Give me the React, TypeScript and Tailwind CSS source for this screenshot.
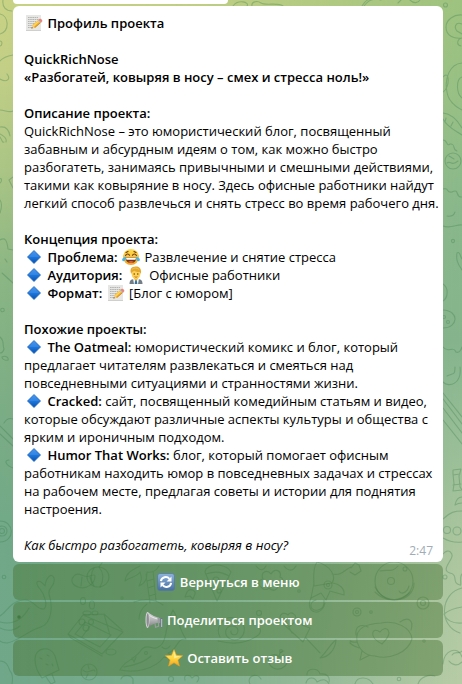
import type { ReactNode } from "react";

function Wallpaper() {
  return (
    <div className="absolute inset-0 overflow-hidden" aria-hidden="true">
      <svg className="absolute inset-0 h-full w-full" viewBox="0 0 100 100" preserveAspectRatio="none">
        <defs>
          <linearGradient id="wallLeft" x1="0" y1="0" x2="0" y2="1">
            <stop offset="0" stopColor="#c9d285" />
            <stop offset="0.1" stopColor="#c3cf86" />
            <stop offset="0.25" stopColor="#aac585" />
            <stop offset="0.4" stopColor="#8bb684" />
            <stop offset="0.6" stopColor="#7bad85" />
            <stop offset="0.8" stopColor="#70a888" />
            <stop offset="1" stopColor="#70a78a" />
          </linearGradient>
          <linearGradient id="wallRight" x1="0" y1="0" x2="0" y2="1">
            <stop offset="0" stopColor="#9dc27f" />
            <stop offset="0.15" stopColor="#96bf85" />
            <stop offset="0.3" stopColor="#89b78b" />
            <stop offset="0.5" stopColor="#85b48c" />
            <stop offset="0.65" stopColor="#99be97" />
            <stop offset="0.8" stopColor="#acc69f" />
            <stop offset="1" stopColor="#b7cca6" />
          </linearGradient>
          <linearGradient id="wallFade" x1="0" y1="0" x2="1" y2="0">
            <stop offset="0" stopColor="#000" />
            <stop offset="0.4" stopColor="#333" />
            <stop offset="0.7" stopColor="#888" />
            <stop offset="1" stopColor="#fff" />
          </linearGradient>
          <mask id="wallMask">
            <rect width="100" height="100" fill="url(#wallFade)" />
          </mask>
        </defs>
        <rect width="100" height="100" fill="url(#wallLeft)" />
        <rect width="100" height="100" fill="url(#wallRight)" mask="url(#wallMask)" />
      </svg>
      <svg
        className="absolute inset-0 h-full w-full"
        viewBox="0 0 462 684"
        preserveAspectRatio="xMidYMax slice"
        fill="none"
        stroke="#3f7d50"
        strokeOpacity="0.34"
        strokeWidth="1.1"
        strokeLinecap="round"
        strokeLinejoin="round"
      >
        {/* left edge */}
        <path d="M3 0c-1 7 3 11 9 11M0 14c9 2 10 17 0 20M0 41c3 0 2 5 0 5M13 55C8 56 3 57 0 61M0 79c7 4 11 0 7-5M0 110c5 0 9 3 13 1M0 127c6-1 9 3 10 9M0 134c4 2 7 5 6 8M0 137c4 7 2 5 4 5M13 177l-4 3 4 8M0 179c2-2 2 3 0 4M0 200c3 4 1 10 0 13M0 240c5-3 7 0 8 9l5 1M2 273l11 10M5 259l2 3" />
        <circle cx="2.500" cy="310" r="1.800" />
        <path d="M0 337c5 4 2 8 4 12-1 4-4 4-4 4M2 357c4-2 7 1 6 3-3 1-6-1-6-3M0 426l13 13M0 434l13 12M4 423c3-5 6-5 9-4M9 460c-5 0-4 5 4 8" />
        <path d="M0 521c14 0 16 20 0 21" />
        <circle cx="2" cy="531" r="5" />
        <circle cx="2" cy="531" r="2.500" />
        <circle cx="4" cy="577" r="1.800" />
        {/* top edge */}
        <path d="M233 6c5-7 17-4 14 0M252 6c-1-4 5-6 9-3s18-1 22 3M362 6c2-3 5-6 6-6M364 6c4-6 10-8 17-6M398 3l3-3M410 0c4 4 8 3 10 0" />
        {/* right edge */}
        <circle cx="445.500" cy="5" r="2" />
        <path d="M462 15c-8-1-16 5-16 12 0 9 8 12 16 11M462 24c-7-3-8 4-5 7l5 3M462 38c-5 1-6 7-1 8M462 63c-12 1-18 15-15 29 1 8 8 15 15 18M462 77c-6 2-6 16 0 21M443 77c7-8 7 11 0 15M443 113c9 1 15 8 19 15M443 119c4 8 13 12 19 16M446 118l-1 4M453 122l-2 4M443 140c5 0 3 7 7 4 6-1 2 6 7 7" />
        <circle cx="453" cy="161" r="8" />
        <path d="M447 163c4-3 4 4 11-2M449 156l5 3M443 189c7-2 2 4 9 3 8-4 3 6 10 5M447 216c5 1 7-1 8-4M443 226c8 3 14-2 19-1" />
        <circle cx="453" cy="241" r="1.600" />
        <path d="M457 253c3-2 3 3 5 6M457 253c-1 6 0 10 5 17M443 284c6 4 5 14 0 17M443 310c17 1 15 18 0 18" />
        <circle cx="444" cy="317" r="1.500" />
        <circle cx="448" cy="322" r="1.500" />
        <path d="M443 347c5 7 10-2 13 5 4 2 6-5 6-5M443 382c6 6 19 2 17-15M447 376c7-3 8-1 8-9M443 393l19 24M443 399l19 25M443 408l19 25M443 420l19 24" />
        <path d="M453 470l8-1-2 7 1 11 2 3-9 1 1-7-1-10zM453 475l7-1M453 485l8-1M455 505c1-5 4-8 7-8M455 505c3-2 4-2 7-2M443 519c7-7 12-8 19-8M443 538c7 4 12 5 19 4" />
        <circle cx="447" cy="530" r="3.500" />
        <circle cx="457" cy="531" r="4" />
        <path d="M443 554c6-7 11 0 8 5-4 7-8 12-1 14 9 2 1 10 10 12 2 1-1-8 2-11M462 588c-22 5-24 38-2 45M444 614c4-3 10-6 18-7M444 614c2 6 9 10 18 9M443 664c1-14 15-19 19-7" />
        <circle cx="445" cy="577" r="2" />
        <path d="M452 655c3-5 7 0 10-4M449 661c4 5 9 5 13 1" />
        {/* whale */}
        <path d="M0 616c7-4 11-16 25-16 10 0 11 10 19 9 4-3 1-14-4-20-7-8-1-11 5-3 1-9 7-14 9-8 2 9-6 8-5 16 4 12 3 29-8 33-14 4-22 14-34 16-4 0-6-1-7-2" />
        <path d="M0 622c16 4 24-5 29-14M0 628c8 4 15 2 20-2" />
        <circle cx="19" cy="617" r="1.500" fill="#3f7d50" />
        {/* croissant and pumpkin */}
        <path d="M74 576c3-4 7-1 10 0 6 2 10-3 11 0 0 8-9 14-17 11-6-2-8-7-4-11zM82 577l-1 9M90 577l2 7" />
        <ellipse cx="98" cy="577" rx="11" ry="10" />
        <path d="M94 568c-4 6-3 13 0 18M99 567c5 6 5 13 1 20M99 567l3-4" />
        {/* nuts */}
        <ellipse cx="83" cy="601" rx="2.500" ry="3.500" />
        <ellipse cx="92" cy="605" rx="2.500" ry="4" />
        <ellipse cx="87" cy="613" rx="4" ry="2" />
        <ellipse cx="95" cy="613" rx="3" ry="2" />
        <circle cx="122" cy="598" r="1.200" />
        {/* box of sweets */}
        <path d="M68 634l15-19 40 17-21 22zM83 615l21-1 18 16M68 634l3 4 31 18M75 634l10-12 26 13-11 12zM90 626l-8 11M104 614l6 21" />
        <circle cx="82" cy="622" r="3" />
        <circle cx="86" cy="628" r="3" />
        <circle cx="91" cy="622" r="2.500" />
        <ellipse cx="111" cy="652" rx="5" ry="3" />
        {/* ice lolly */}
        <path d="M35 659c0-12 16-14 20-3l4 14-17 8c-4-5-7-12-7-19zM46 677l5 7 4-2-3-8M40 658l2 1M47 655l2 1M46 664l2 1M52 664l1 2" />
        <circle cx="89" cy="672" r="8" />
        <path d="M83 670c5 6 10-3 12 1M88 665l1 4M86 678l2-4" />
        {/* palm */}
        <path d="M140 566c-7 4-14 6-15 15 6-5 11-3 15-9 2 6 2 8-1 14 7-3 8-8 8-14 6 1 9-1 12-6M146 574l4 29M153 571l3 30M147 581l7-2M148 588l6-2M149 596l7-2M134 602c8-3 20-4 29 3M139 619c0-6 3-11 8-15" />
        {/* crocodile */}
        <path d="M120 670c4-10 13-8 22-21 5-5 10 0 14-1 13-4 7-20 17-38 6 9 6 20 13 29-10-1-8 11-18 14 5 3 1 6-4 4-10 13-29 16-44 13zM124 667c12-2 22-6 27-11M132 658l2 4 2-5M162 647c3 3 6 2 8-1" />
        <circle cx="146" cy="653" r="1.500" />
        {/* pizza slice */}
        <path d="M206 569c8-7 21-4 25 3l-14 29-12-29zM206 574c8-3 15-3 23 2" />
        <circle cx="216" cy="580" r="3" />
        <circle cx="219" cy="591" r="2" />
        <path d="M187 592c3-5 9-1 8 2l-2 5-3-3-5 1z" />
        {/* snail */}
        <path d="M218 641c20 5 32 0 39-5 5-3 4-8 1-11M220 637c-5-9 3-22 15-19 11 2 12 16 4 21-7 3-15-2-13-9 2-6 12-5 12 1-1 6-8 4-7 0M258 626l3-5M254 625l-2-5" />
        <circle cx="259" cy="613" r="2.500" />
        <circle cx="299" cy="591" r="1.300" />
        <path d="M262 588c-5-4-4-8 1-9-3-7 4-10 8-5 4-7 11-3 9 3 5 2 3 9-2 8 0 5-5 7-9 3-2 2-5 2-7 0zM256 566c5 6 8 4 10 0M284 566c5 6 9 5 12 0M288 582l6 1" />
        <path d="M269 663c-3-9 7-10 11-6 6-3 9 5 5 9-5 5-13 4-16-3zM280 657c-2-4 2-6 4-6M276 655l4 3 4-3" />
        <circle cx="281" cy="651" r="1.400" />
        {/* ice cream glass */}
        <path d="M280 617c1-5 6-4 8-2 3-5 8 0 8 3 5-1 8 4 6 7l8 3-7 14-22-20zM306 638l14 15M284 618l8 15M297 620l-8 7M336 640c-6 4-9 12-16 18 8-1 15-7 16-18" />
        {/* rocket */}
        <path d="M317 562c-5 7-3 18-3 24l18-3c4-6 0-17-15-21zM314 583l-3 15 10-5 5 7 4-9 14 4c1-7-5-11-11-12M332 574c10 2 12-4 19-7M351 568l4-5 4 2 2 6-6 4-5-3M316 600c-8 2-6 12 2 10 6-1 6-6 6-10" />
        <circle cx="328" cy="585" r="4" />
        <circle cx="328" cy="585" r="1.500" />
        <path d="M311 598c-7 15 11 20 14 5" />
        {/* planet */}
        <circle cx="394" cy="581" r="19" />
        <path d="M375 587c9 19 39 16 39-4M375 592c11 11 25 10 37-1M380 571c8-2 12 2 18-5M399 591c2 4 8 2 10-5" />
        <circle cx="391" cy="581" r="3.500" />
        <circle cx="405" cy="569" r="2" />
        <circle cx="423" cy="603" r="6" />
        <circle cx="423" cy="603" r="2.500" />
        <circle cx="357" cy="612" r="4" />
        <circle cx="357" cy="612" r="1.500" />
        <circle cx="371" cy="612" r="1.300" />
        {/* candy planet with a heart */}
        <path d="M357 641c-2-14 10-17 24-18 14-3 30 4 31 16-4 14-23 21-37 17-9 0-16-6-18-15zM368 627c-9-4-13 1-12 8M357 642c-9 1-6-4-7 1 4 4 7 4 9 5M362 651l-2 9 10-5M400 622c8-6 14-2 11 8M382 644c-14-7-10-18-2-12 5-8 16-1 2 12z" />
        <circle cx="424" cy="641" r="1.200" />
        {/* bottom edge */}
        <path d="M0 661c6 0 8 4 10 10 3 3 3 7 2 13M121 679c2-5 10-4 12 0v5M185 680c-2-6 5-6 7-2 5-5 9-1 5 4M250 684c-4-8 7-12 11-5M306 683c2-7 9-6 11-1 7-4 10-2 12 2M307 675c-1-7 11-8 13-1 8-1 10 4 9 8M355 684c2-8 13-8 18 0M418 684c2-7 11-10 17-8" />
        <circle cx="171" cy="679" r="2.500" />
        <circle cx="399" cy="679" r="1.800" />
      </svg>
    </div>
  );
}

function Emoji({ label, children }: { label: string; children: ReactNode }) {
  return (
    <svg
      className="mx-px inline-block h-[18px] w-[18px] align-top"
      viewBox="0 0 18 18"
      role="img"
      aria-label={label}
    >
      {children}
    </svg>
  );
}

function Memo() {
  return (
    <Emoji label="memo">
      <path d="M1 1h15v16H1z" fill="#e6e6e4" />
      <path d="M1 16h15v1H1z" fill="#cfcfcd" />
      <g stroke="#a8a8a8" strokeWidth="0.8" strokeDasharray="1.600 0.600">
        <path d="M3 3.500h10M3 5.500h11M3 7.500h8M3 9.500h7M3 11.500h5M3 13.500h4" />
      </g>
      <path d="M6.500 14.500l1-3.500 6.700-5.800 2.400 2.600-6.800 5.900z" fill="#f6b62b" />
      <path d="M8 11.500l6.700-5.800.8.900-6.700 5.900z" fill="#ffd863" />
      <path d="M9.400 13.400l6.700-5.900.5.500-6.800 5.900z" fill="#c97a14" />
      <path d="M13.300 6l1.500-1.300c1.400-.4 2.900 1.300 2.500 2.500l-1.500 1.400z" fill="#e7837d" />
      <path d="M12.700 6.500l.8-.7 2.500 2.700-.8.700z" fill="#b9bcc0" />
      <path d="M6.500 14.500l1-3.500 2.300 2.700z" fill="#efd0a0" />
      <path d="M6.500 14.500l.4-1.400.9 1z" fill="#3c3530" />
    </Emoji>
  );
}

function Diamond() {
  return (
    <Emoji label="blue diamond">
      <defs>
        <linearGradient id="diamondFill" x1="0" y1="0" x2="0" y2="1">
          <stop offset="0" stopColor="#4f9df0" />
          <stop offset="0.5" stopColor="#1f77dc" />
          <stop offset="1" stopColor="#0751ad" />
        </linearGradient>
      </defs>
      <path d="M9 2.500L15.500 9 9 15.500 2.500 9z" fill="url(#diamondFill)" stroke="#1862bd" strokeWidth="0.800" strokeLinejoin="round" />
      <path d="M9 3.400L14.400 9H3.600z" fill="#3f90ec" fillOpacity="0.500" />
    </Emoji>
  );
}

function Joy() {
  return (
    <Emoji label="tears of joy">
      <defs>
        <linearGradient id="faceFill" x1="0" y1="0" x2="0" y2="1">
          <stop offset="0" stopColor="#ffdf52" />
          <stop offset="1" stopColor="#f3a31f" />
        </linearGradient>
      </defs>
      <circle cx="9" cy="9" r="8" fill="url(#faceFill)" />
      <path d="M3.500 9.500h11c-.3 3.800-2.500 5.600-5.500 5.600s-5.200-1.800-5.500-5.600z" fill="#6d3a12" />
      <path d="M4 9.700h10l-.5 2h-9z" fill="#fff" />
      <path d="M6 14c1.500-1.500 4.500-1.500 6 0-1.800 1.300-4.200 1.300-6 0z" fill="#ec5a4d" />
      <path d="M3.600 7.500C4.500 5.600 6.700 5.600 7.500 7.300M10.500 7.300c.8-1.700 3-1.700 3.900.2M4 4.400l2-1M14 4.400l-2-1" fill="none" stroke="#6d3a12" strokeWidth="1.100" strokeLinecap="round" />
      <path d="M4 8.500c0 3-1 4.700-2.500 4.700S-.3 11.300.8 10.300C1.600 9.500 3 9.200 4 8.500zM14 8.500c0 3 1 4.700 2.500 4.700s1.800-1.900.7-2.900c-.8-.8-2.200-1.100-3.200-1.800z" fill="#45b3ee" />
    </Emoji>
  );
}

function OfficeWorker() {
  return (
    <Emoji label="office worker">
      <path d="M2.500 18c0-3.500 1.500-4.700 4.500-5h4c3 .3 4.500 1.500 4.500 5z" fill="#737d87" />
      <path d="M6 12.500h6L11 18H7z" fill="#f4f6f8" />
      <path d="M8.300 14h1.400l.7 4H7.600z" fill="#39719d" />
      <path d="M7 10h4v3l-2 1.500L7 13z" fill="#f0b738" />
      <path d="M4.700 5h8.600v3.500c0 2.700-2 4.600-4.300 4.600s-4.300-1.900-4.300-4.600z" fill="#ffd052" />
      <path d="M4.200 8C2.400 3.500 4.300.8 7.500.8c4-1 7.600 1.700 6.300 7.200l-1-2C10 6 8.300 5.700 7 4.800 6 6 5 5.500 4.200 8z" fill="#e2a72c" />
      <path d="M5 3.300C7 1.500 10 1.700 12 3.400" stroke="#f3c650" strokeWidth="0.900" fill="none" />
      <circle cx="7.200" cy="8" r="0.650" fill="#4b341e" />
      <circle cx="10.800" cy="8" r="0.650" fill="#4b341e" />
      <path d="M7.600 10.700c.9.600 1.900.6 2.800 0" stroke="#9c5b20" strokeWidth="0.800" fill="none" />
    </Emoji>
  );
}

function Arrows() {
  return (
    <Emoji label="refresh">
      <defs>
        <linearGradient id="tileFill" x1="0" y1="0" x2="0" y2="1">
          <stop offset="0" stopColor="#8db3dc" />
          <stop offset="1" stopColor="#476f9f" />
        </linearGradient>
      </defs>
      <rect x="0.500" y="0.500" width="17" height="17" rx="2.500" fill="url(#tileFill)" stroke="#55779f" strokeWidth="0.700" />
      <path d="M3.900 8.200C4.500 3.700 10 2.800 12.400 5.800M14.100 9.800c-.6 4.500-6.100 5.400-8.500 2.400" fill="none" stroke="#fff" strokeWidth="2" />
      <path d="M14.500 3.500v5h-5zM3.500 14.500v-5h5z" fill="#fff" />
    </Emoji>
  );
}

function Megaphone() {
  return (
    <Emoji label="megaphone">
      <defs>
        <linearGradient id="hornFill" x1="0" y1="0" x2="0" y2="1">
          <stop offset="0" stopColor="#d9d9da" />
          <stop offset="0.500" stopColor="#b4b5b7" />
          <stop offset="1" stopColor="#77797c" />
        </linearGradient>
      </defs>
      <path d="M2.500 1C7 4.500 10.500 6 16 7.500v4C10.500 12 7 13 2.500 17z" fill="url(#hornFill)" />
      <ellipse cx="2.500" cy="9" rx="2" ry="8" fill="#d4d5d6" />
      <ellipse cx="2.700" cy="9" rx="1.200" ry="6.700" fill="#8c8e91" />
      <path d="M4.500 4.500c3 2.200 6 3 11 4.200" stroke="#ececed" strokeWidth="0.900" fill="none" />
      <path d="M12.500 6.500l4.500 1v4.300l-4.500.4z" fill="#9b9da1" />
      <path d="M15.200 7h2.300v9.500h-1.800l-.5-4z" fill="#6f7986" />
      <path d="M16.700 8v8" stroke="#d0dae5" strokeWidth="0.800" />
      <path d="M10 12.300l.5 4 3-1v-3.300" fill="none" stroke="#9a9c9e" strokeWidth="1.100" />
    </Emoji>
  );
}

function Star() {
  return (
    <Emoji label="star">
      <defs>
        <linearGradient id="starFill" x1="0" y1="0" x2="0" y2="1">
          <stop offset="0" stopColor="#ffed78" />
          <stop offset="0.550" stopColor="#ffd43e" />
          <stop offset="1" stopColor="#f2a01c" />
        </linearGradient>
      </defs>
      <path d="M9 .6l2.400 5.700 6.200.5-4.700 4.100 1.500 6.200L9 13.800l-5.400 3.300 1.500-6.200L.4 6.800l6.200-.5z" fill="url(#starFill)" stroke="#f0a222" strokeWidth="0.600" strokeLinejoin="round" />
      <path d="M9 2.500l1.700 4.600 4.500.4L9 9.500z" fill="#fff3a6" fillOpacity="0.700" />
    </Emoji>
  );
}

const concept = [
  { name: "Проблема:", icon: <Joy />, text: "Развлечение и снятие стресса" },
  { name: "Аудитория:", icon: <OfficeWorker />, text: "Офисные работники" },
  { name: "Формат:", icon: <Memo />, text: "[Блог с юмором]" },
];

const similar = [
  {
    name: "The Oatmeal:",
    text: "юмористический комикс и блог, который предлагает читателям развлекаться и смеяться над повседневными ситуациями и странностями жизни.",
  },
  {
    name: "Cracked:",
    text: "сайт, посвященный комедийным статьям и видео, которые обсуждают различные аспекты культуры и общества с ярким и ироничным подходом.",
  },
  {
    name: "Humor That Works:",
    text: "блог, который помогает офисным работникам находить юмор в повседневных задачах и стрессах на рабочем месте, предлагая советы и истории для поднятия настроения.",
  },
];

const actions = [
  { icon: <Arrows />, text: "Вернуться в меню" },
  { icon: <Megaphone />, text: "Поделиться проектом" },
  { icon: <Star />, text: "Оставить отзыв" },
];

export default function App() {
  return (
    <main className="relative min-h-screen font-['Open_Sans','Noto_Sans',sans-serif] text-[13px] leading-[18px] text-black">
      <Wallpaper />
      <div className="relative ml-[13px] mr-[19px] flex flex-col gap-0.5 pb-2">
        <div className="h-1 w-1/2 rounded-b-md bg-white" />

        <article className="flex flex-col gap-[18px] rounded-md bg-white pt-2 pr-1 pb-0.5 pl-[11px]">
          <h1 className="font-semibold">
            <Memo /> Профиль проекта
          </h1>

          <div className="font-semibold">
            <h2>QuickRichNose</h2>
            <p>«Разбогатей, ковыряя в носу – смех и стресса ноль!»</p>
          </div>

          <section>
            <h2 className="font-semibold">Описание проекта:</h2>
            <p>
              QuickRichNose – это юмористический блог, посвященный забавным и абсурдным идеям о том, как можно быстро
              разбогатеть, занимаясь привычными и смешными действиями, такими как ковыряние в носу. Здесь офисные
              работники найдут легкий способ развлечься и снять стресс во время рабочего дня.
            </p>
          </section>

          <section>
            <h2 className="font-semibold">Концепция проекта:</h2>
            {concept.map((item) => (
              <p key={item.name}>
                <Diamond /> <b className="font-semibold">{item.name}</b> {item.icon} {item.text}
              </p>
            ))}
          </section>

          <section>
            <h2 className="font-semibold">Похожие проекты:</h2>
            {similar.map((item) => (
              <p key={item.name}>
                <Diamond /> <b className="font-semibold">{item.name}</b> {item.text}
              </p>
            ))}
          </section>

          <div className="flex items-start justify-between">
            <p className="italic">Как быстро разбогатеть, ковыряя в носу?</p>
            <time className="mt-1.5 mr-1.5 text-[12px] text-[#a0acb6]">2:47</time>
          </div>
        </article>

        {actions.map((action) => (
          <button
            key={action.text}
            type="button"
            className="h-9 rounded-md bg-[#487332]/45 text-center font-semibold text-white"
          >
            {action.icon} {action.text}
          </button>
        ))}
      </div>
    </main>
  );
}
